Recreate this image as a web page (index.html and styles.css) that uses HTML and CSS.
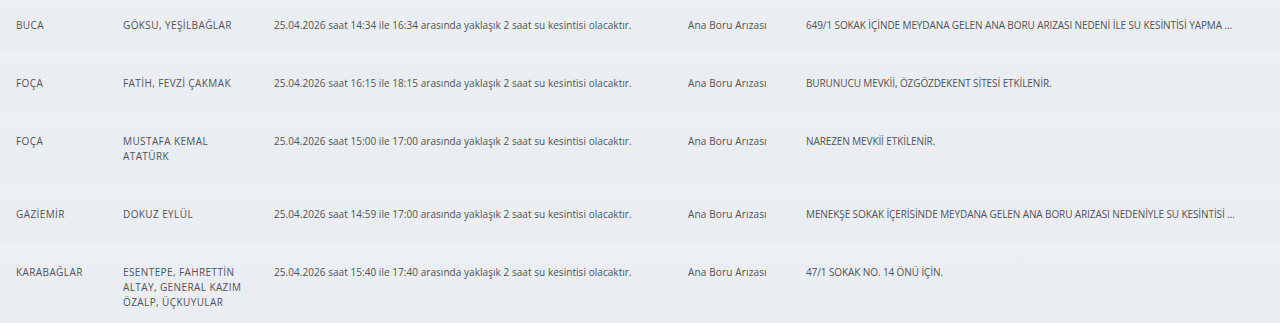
FILE: index.html
```html
<!DOCTYPE html>
<html lang="tr">
<head>
<meta charset="utf-8">
<title>Su Kesintileri</title>
<link rel="stylesheet" href="styles.css">
</head>
<body>
<div class="table">
  <div class="row">
    <div class="cell c1">BUCA</div>
    <div class="cell c2">GÖKSU, YEŞİLBAĞLAR</div>
    <div class="cell c3">25.04.2026 saat 14:34 ile 16:34 arasında yaklaşık 2 saat su kesintisi olacaktır.</div>
    <div class="cell c4">Ana Boru Arızası</div>
    <div class="cell c5">649/1 SOKAK İÇİNDE MEYDANA GELEN ANA BORU ARIZASI NEDENİ İLE SU KESİNTİSİ YAPMA ...</div>
  </div>
  <div class="row">
    <div class="cell c1">FOÇA</div>
    <div class="cell c2">FATİH, FEVZİ ÇAKMAK</div>
    <div class="cell c3">25.04.2026 saat 16:15 ile 18:15 arasında yaklaşık 2 saat su kesintisi olacaktır.</div>
    <div class="cell c4">Ana Boru Arızası</div>
    <div class="cell c5">BURUNUCU MEVKİİ, ÖZGÖZDEKENT SİTESİ ETKİLENİR.</div>
  </div>
  <div class="row">
    <div class="cell c1">FOÇA</div>
    <div class="cell c2">MUSTAFA KEMAL ATATÜRK</div>
    <div class="cell c3">25.04.2026 saat 15:00 ile 17:00 arasında yaklaşık 2 saat su kesintisi olacaktır.</div>
    <div class="cell c4">Ana Boru Arızası</div>
    <div class="cell c5">NAREZEN MEVKİİ ETKİLENİR.</div>
  </div>
  <div class="row">
    <div class="cell c1">GAZİEMİR</div>
    <div class="cell c2">DOKUZ EYLÜL</div>
    <div class="cell c3">25.04.2026 saat 14:59 ile 17:00 arasında yaklaşık 2 saat su kesintisi olacaktır.</div>
    <div class="cell c4">Ana Boru Arızası</div>
    <div class="cell c5">MENEKŞE SOKAK İÇERİSİNDE MEYDANA GELEN ANA BORU ARIZASI NEDENİYLE SU KESİNTİSİ ...</div>
  </div>
  <div class="row">
    <div class="cell c1">KARABAĞLAR</div>
    <div class="cell c2">ESENTEPE, FAHRETTİN ALTAY, GENERAL KAZIM ÖZALP, ÜÇKUYULAR</div>
    <div class="cell c3">25.04.2026 saat 15:40 ile 17:40 arasında yaklaşık 2 saat su kesintisi olacaktır.</div>
    <div class="cell c4">Ana Boru Arızası</div>
    <div class="cell c5">47/1 SOKAK NO. 14 ÖNÜ İÇİN.</div>
  </div>
</div>
</body>
</html>
```
FILE: styles.css
```css
html, body {
  margin: 0;
  padding: 0;
  background: #eaeef2;
}
body {
  font-family: "Open Sans", "Noto Sans", sans-serif;
  font-size: 10px;
  color: #505357;
  overflow: hidden;
}
.table {
  margin-top: -4px;
  display: flex;
  flex-direction: column;
}
.row {
  display: grid;
  grid-template-columns: 107px 151px 414px 118px 1fr;
  padding: 22px 0 21px 16px;
  line-height: 15px;
  background: linear-gradient(#eef1f4, #eaedf1 30%, #eaeef2);
}
.cell {
  padding-right: 12px;
}
.c1, .c2 {
  letter-spacing: 0.4px;
}
.c2 {
  padding-right: 24px;
}
.c3 {
  letter-spacing: 0.05px;
}
.c4 {
  letter-spacing: 0.15px;
}
.c5 {
  letter-spacing: -0.1px;
}
```
